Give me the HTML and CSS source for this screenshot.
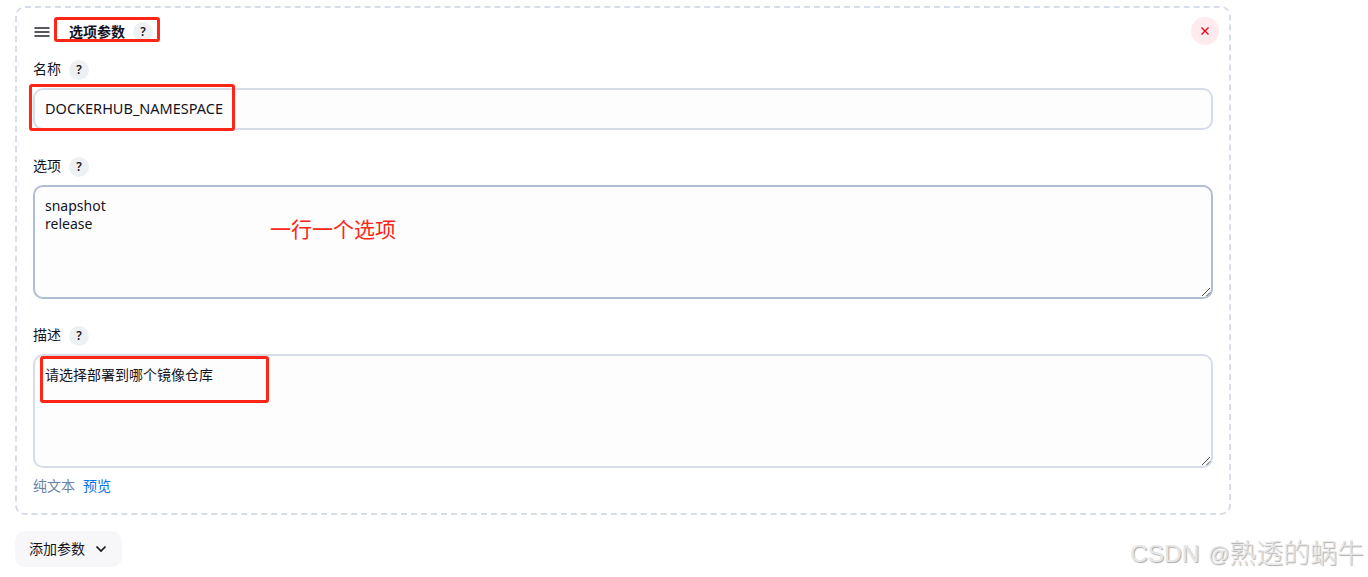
FILE: index.html
```html
<!DOCTYPE html>
<html lang="zh-CN">
<head>
<meta charset="utf-8">
<title>选项参数</title>
<link rel="stylesheet" href="styles.css">
</head>
<body>
<main class="page">
  <section class="card">
    <header class="card-head">
      <svg class="handle" width="16" height="12" viewBox="0 0 16 12"><path d="M.5 2h15M.5 6h15M.5 10h15" stroke="#22222d" stroke-width="1.550" fill="none"/></svg>
      <span class="title">选项参数</span>
      <span class="help">?</span>
      <button class="close" aria-label="删除"><svg width="10" height="10" viewBox="0 0 10 10"><path d="M1.500 1.500l7 7M8.500 1.500l-7 7" stroke="#e6001f" stroke-width="1.400" fill="none"/></svg></button>
    </header>
    <div class="field">
      <div class="label"><span class="label-text">名称</span><span class="help">?</span></div>
      <div class="control input"><span class="name-value">DOCKERHUB_NAMESPACE</span></div>
    </div>
    <div class="field">
      <div class="label"><span class="label-text">选项</span><span class="help">?</span></div>
      <div class="control area hovered"><span>snapshot<br>release</span>
        <svg class="grip" width="10" height="10" viewBox="0 0 10 10"><path d="M1 9L9 1M5.500 9L9 5.500" stroke="#555" fill="none"/></svg>
      </div>
    </div>
    <div class="field">
      <div class="label"><span class="label-text">描述</span><span class="help">?</span></div>
      <div class="control area">请选择部署到哪个镜像仓库
        <svg class="grip" width="10" height="10" viewBox="0 0 10 10"><path d="M1 9L9 1M5.500 9L9 5.500" stroke="#555" fill="none"/></svg>
      </div>
    </div>
    <footer class="format"><span>纯文本</span><a class="preview">预览</a></footer>
  </section>
  <button class="add"><span>添加参数</span><svg width="12" height="8" viewBox="0 0 12 8"><path d="M1.500 1.500L6 6l4.500-4.500" stroke="#14141f" stroke-width="1.7" fill="none"/></svg></button>
  <div class="mark mark-title"></div>
  <div class="mark mark-name"></div>
  <div class="mark mark-desc"></div>
  <div class="note">一行一个选项</div>
  <div class="watermark"><span class="wm-latin">CSDN</span><span class="wm-at">@</span><span class="wm-name">熟透的蜗牛</span></div>
</main>
</body>
</html>
```
FILE: styles.css
```css
* { box-sizing: border-box; }
body {
  margin: 0;
  background: #fff;
  color: #14141f;
  font: 14px/18px "Noto Sans", "Noto Sans CJK SC", sans-serif;
}
button { border: 0; padding: 0; font: inherit; color: inherit; }
.page {
  position: relative;
  width: 1368px;
  height: 577px;
  padding: 6px 0 0 15px;
  overflow: hidden;
}
.card {
  width: 1216px;
  height: 509px;
  padding: 9px 16px 0;
  border: 2px dashed #d7dde8;
  border-radius: 10px;
}
.card-head {
  display: flex;
  align-items: center;
  height: 28px;
  margin-right: -6px;
  padding-left: 1px;
}
.handle { margin: 2px 19px 0 0; }
.title { width: 56px; margin-top: 1px; font-weight: 700; }
.help {
  width: 20px;
  height: 20px;
  border-radius: 50%;
  background: #edf1f4;
  font-size: 12px;
  line-height: 20px;
  font-weight: 600;
  text-align: center;
}
.card-head .help { margin: 2px 0 0 8px; }
.close {
  display: flex;
  align-items: center;
  justify-content: center;
  width: 28px;
  height: 28px;
  margin-left: auto;
  border-radius: 50%;
  background: #fdebed;
}
.field { padding-top: 15px; }
.field + .field { padding-top: 27px; }
.label {
  display: flex;
  align-items: center;
  gap: 8px;
  height: 20px;
  margin-bottom: 8px;
}
.label-text { padding-bottom: 2px; }
.control {
  position: relative;
  border: 2px solid #d7dde8;
  border-radius: 10px;
  background: #fdfdfd;
  padding: 10px;
}
.input { height: 42px; }
.area { height: 114px; }
.hovered { border-color: #afbed2; }
.name-value { display: block; font-size: 14.5px; line-height: 16px; }
.grip { position: absolute; right: 0; bottom: 0; }
.format { display: flex; gap: 8px; margin-top: 9px; color: #6b82a6; }
.preview { color: #0072e5; }
.add {
  display: flex;
  align-items: center;
  gap: 10px;
  width: 107px;
  height: 36px;
  margin-top: 16px;
  padding-left: 14px;
  border-radius: 10px;
  background: #f7f7f9;
}
.mark { position: absolute; border: 3px solid #ff2517; border-radius: 3px; }
.mark-title { left: 54px; top: 17px; width: 106px; height: 25px; }
.mark-name { left: 29px; top: 84px; width: 206px; height: 47px; }
.mark-desc { left: 40px; top: 356px; width: 229px; height: 47px; }
.note {
  position: absolute;
  left: 270px;
  top: 213px;
  color: #ff2517;
  font: 21px/30px "Noto Sans CJK SC", sans-serif;
}
.watermark {
  position: absolute;
  left: 1130px;
  top: 534px;
  display: flex;
  white-space: nowrap;
  color: #e6e6e6;
  text-shadow: 1px 1px 1px #aaa;
  font: 300 27px/36px "Noto Sans CJK SC", sans-serif;
}
.wm-latin, .wm-at { padding-top: 2px; font-family: "Liberation Sans", sans-serif; font-size: 24.5px; }
.wm-latin { width: 78px; }
.wm-at { width: 21px; font-size: 21px; }
```
